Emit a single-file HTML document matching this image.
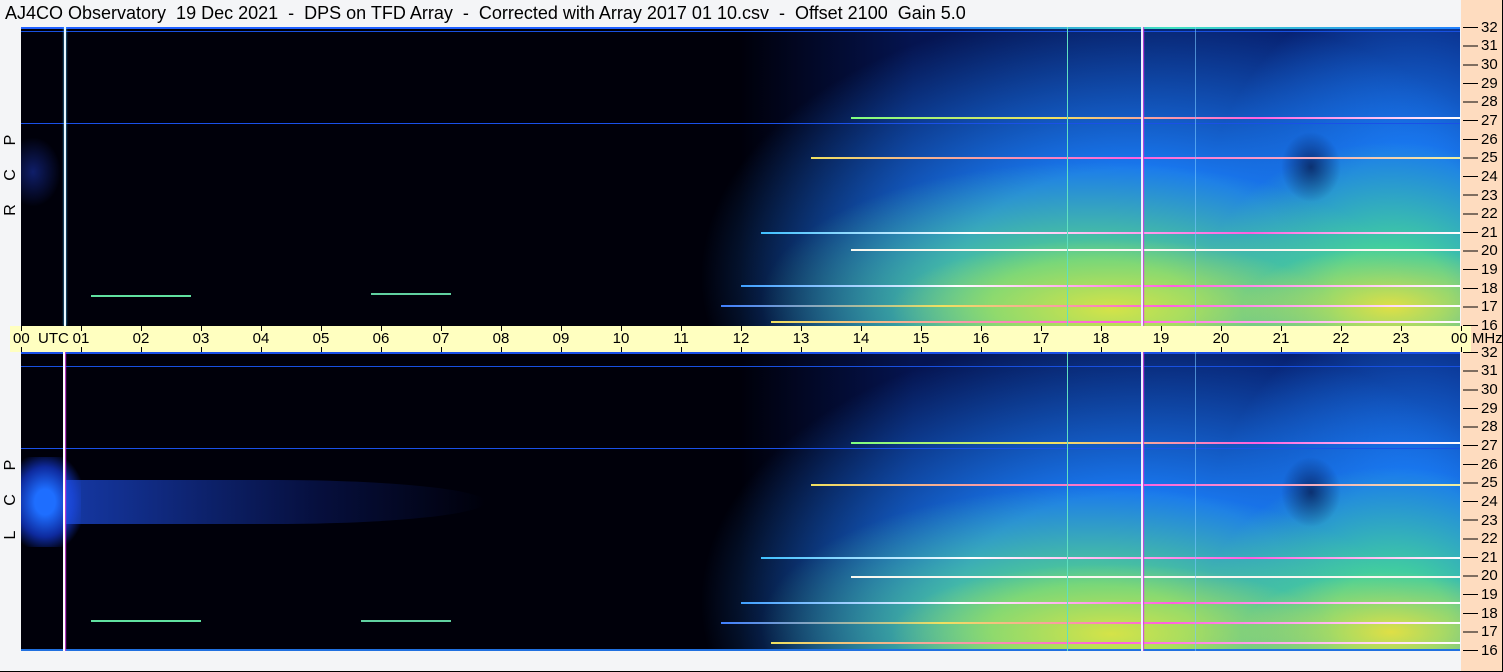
<!DOCTYPE html>
<html><head><meta charset="utf-8"><style>
*{margin:0;padding:0;box-sizing:border-box}
body{width:1503px;height:672px;background:#f4f5f7;position:relative;overflow:hidden;font-family:"Liberation Sans",sans-serif;color:#000}
.title{position:absolute;left:5px;top:3px;font-size:18px;line-height:20px;white-space:pre}
.rs{position:absolute;left:1461px;top:0;width:42px;height:672px;background:#fedcbf}
.spec{position:absolute;left:21px;width:1439px;height:299px;overflow:hidden;
background:
radial-gradient(ellipse 30px 35px at 1290px 140px,rgba(0,0,40,.6),rgba(0,0,40,0)),
radial-gradient(ellipse 150px 60px at 1370px 280px,rgba(240,225,60,.9),rgba(220,230,60,0)),
radial-gradient(ellipse 220px 70px at 1090px 282px,rgba(235,230,60,.85),rgba(220,230,60,0)),
radial-gradient(ellipse 330px 140px at 1070px 275px,rgba(90,220,130,.9) 30%,rgba(40,180,200,0)),
radial-gradient(ellipse 190px 150px at 1370px 265px,rgba(70,215,150,.9) 30%,rgba(40,180,200,0)),
radial-gradient(ellipse 430px 270px at 1110px 250px,rgba(25,120,240,1) 40%,rgba(10,50,180,0)),
radial-gradient(ellipse 210px 270px at 1385px 230px,rgba(25,120,240,1) 40%,rgba(10,50,180,0)),
linear-gradient(to right,rgba(0,0,0,0) 50%,rgba(10,40,150,.5) 62%,rgba(10,50,170,.7)),
#00000a}
.h{position:absolute;height:1px}
.v{position:absolute;top:0;width:2px;height:299px}
.ax{position:absolute;left:10px;top:326px;width:1461px;height:26px;background:#ffffc0}
.t{position:absolute;top:4px;font-size:15px;line-height:17px;transform:translateX(-50%);white-space:nowrap}
.fl{position:absolute;left:1481px;font-size:15px;line-height:15px}
.tl{position:absolute;left:1463px;width:15px;height:1px;background:#000}
.lab{position:absolute;left:3px;font-size:16px;line-height:16px;transform:rotate(-90deg);width:16px;text-align:center}
</style></head><body>
<div class="rs"></div>
<div class="title">AJ4CO Observatory  19 Dec 2021  -  DPS on TFD Array  -  Corrected with Array 2017 01 10.csv  -  Offset 2100  Gain 5.0</div>

<div class="lab" style="top:132px">P</div><div class="lab" style="top:167px">C</div><div class="lab" style="top:202px">R</div>
<div class="lab" style="top:457px">P</div><div class="lab" style="top:492px">C</div><div class="lab" style="top:527px">L</div>

<div class="spec" style="top:27px">
<div class="h" style="top:0;left:0;width:1439px;height:2px;background:linear-gradient(to right,#2060ff 60%,#40e0c0 80%,#2080ff)"></div>
<div class="h" style="top:4px;left:0;width:1439px;background:#1850e0"></div>
<div class="h" style="top:96px;left:0;width:1439px;background:#1a50e8"></div>
<div class="h" style="top:130px;left:790px;width:649px;height:2px;background:linear-gradient(to right,#f0e060,#ff60e0 50%,#f0f0a0)"></div>
<div class="h" style="top:90px;left:830px;width:609px;height:2px;background:linear-gradient(to right,#80ff80,#f0e060,#ff60e0,#fff)"></div>
<div class="h" style="top:205px;left:740px;width:699px;height:2px;background:linear-gradient(to right,#40c0ff,#ffffff 30%,#ff60e0 70%,#fff)"></div>
<div class="h" style="top:222px;left:830px;width:609px;height:2px;background:#f8f8f0"></div>
<div class="h" style="top:258px;left:720px;width:719px;height:2px;background:linear-gradient(to right,#40a0ff,#fff 30%,#ff60e0 60%,#fff)"></div>
<div class="h" style="top:278px;left:700px;width:739px;height:2px;background:linear-gradient(to right,#4080ff,#f0e060 30%,#ff60e0 60%,#fff)"></div>
<div class="h" style="top:294px;left:750px;width:689px;height:2px;background:linear-gradient(to right,#f0e060,#ff60e0,#fff)"></div>
<div class="h" style="top:268px;left:70px;width:100px;height:2px;background:#60e0a0"></div>
<div class="h" style="top:266px;left:350px;width:80px;height:2px;background:#60d0a0"></div>
<div style="position:absolute;left:0;top:110px;width:40px;height:70px;background:radial-gradient(ellipse at 30% 50%,rgba(30,60,200,.5),rgba(0,0,0,0) 70%)"></div>
<div class="v" style="left:43px;background:#e8f8ff;box-shadow:0 0 2px #40c0ff"></div>
<div class="v" style="left:1046px;width:1px;background:#60e0c0"></div>
<div class="v" style="left:1120px;background:#f0f0ff;box-shadow:1px 0 1px #d040e0"></div>
<div class="v" style="left:1174px;width:1px;background:rgba(120,200,255,.6)"></div>
</div>

<div class="ax">
<div class="t" style="left:3px;transform:none">00&nbsp; UTC</div>
<div class="t" style="left:71px">01</div><div class="t" style="left:131px">02</div><div class="t" style="left:191px">03</div><div class="t" style="left:251px">04</div><div class="t" style="left:311px">05</div><div class="t" style="left:371px">06</div><div class="t" style="left:431px">07</div><div class="t" style="left:491px">08</div><div class="t" style="left:551px">09</div><div class="t" style="left:611px">10</div><div class="t" style="left:671px">11</div><div class="t" style="left:731px">12</div><div class="t" style="left:791px">13</div><div class="t" style="left:851px">14</div><div class="t" style="left:911px">15</div><div class="t" style="left:971px">16</div><div class="t" style="left:1031px">17</div><div class="t" style="left:1091px">18</div><div class="t" style="left:1151px">19</div><div class="t" style="left:1211px">20</div><div class="t" style="left:1271px">21</div><div class="t" style="left:1331px">22</div><div class="t" style="left:1391px">23</div>
<div class="t" style="left:1441px;transform:none">00 MHz</div>
</div>

<div class="spec" style="top:352px">
<div class="h" style="top:0;left:0;width:1439px;height:2px;background:#1a50e8"></div>
<div class="h" style="top:14px;left:0;width:1439px;background:#1850e0"></div>
<div class="h" style="top:96px;left:0;width:1439px;background:#1a50e8"></div>
<div class="h" style="top:132px;left:790px;width:649px;height:2px;background:linear-gradient(to right,#f0e060,#ff60e0 50%,#f0f0a0)"></div>
<div class="h" style="top:90px;left:830px;width:609px;height:2px;background:linear-gradient(to right,#80ff80,#f0e060,#ff60e0,#fff)"></div>
<div class="h" style="top:205px;left:740px;width:699px;height:2px;background:linear-gradient(to right,#40c0ff,#fff 30%,#ff60e0 70%,#fff)"></div>
<div class="h" style="top:224px;left:830px;width:609px;height:2px;background:#f8f8f0"></div>
<div class="h" style="top:250px;left:720px;width:719px;height:2px;background:linear-gradient(to right,#40a0ff,#fff 30%,#ff60e0 60%,#fff)"></div>
<div class="h" style="top:270px;left:700px;width:739px;height:2px;background:linear-gradient(to right,#4080ff,#f0e060 30%,#ff60e0 60%,#fff)"></div>
<div class="h" style="top:290px;left:750px;width:689px;height:2px;background:linear-gradient(to right,#f0e060,#ff60e0,#fff)"></div>
<div class="h" style="top:268px;left:70px;width:110px;height:2px;background:#60e0a0"></div>
<div class="h" style="top:268px;left:340px;width:90px;height:2px;background:#60d0a0"></div>
<div style="position:absolute;left:0;top:105px;width:60px;height:90px;background:radial-gradient(ellipse at 40% 50%,rgba(30,110,255,1) 20%,rgba(20,60,220,.7) 55%,rgba(0,0,0,0) 80%)"></div>
<div style="position:absolute;left:45px;top:128px;width:420px;height:44px;background:linear-gradient(to right,rgba(30,80,230,.7),rgba(20,50,180,.3) 60%,rgba(0,0,0,0));border-radius:0 50% 50% 0"></div>
<div class="h" style="top:297px;left:0;width:1439px;height:2px;background:#2070e0"></div>
<div class="v" style="left:42px;background:#fff;box-shadow:1px 0 1px #d040e0"></div>
<div class="v" style="left:1046px;width:1px;background:#60e0c0"></div>
<div class="v" style="left:1120px;background:#f0f0ff;box-shadow:1px 0 1px #d040e0"></div>
<div class="v" style="left:1174px;width:1px;background:rgba(120,200,255,.6)"></div>
</div>

<!-- freq ticks -->
<div style="position:absolute;left:1463px;top:27px;width:15px;height:300px;background:repeating-linear-gradient(to bottom,#000 0 1px,transparent 1px 18.63px)"></div>
<div style="position:absolute;left:1463px;top:352px;width:15px;height:300px;background:repeating-linear-gradient(to bottom,#000 0 1px,transparent 1px 18.63px)"></div>
<div class="fl" style="top:20px">32</div><div class="fl" style="top:38px">31</div><div class="fl" style="top:57px">30</div><div class="fl" style="top:76px">29</div><div class="fl" style="top:94px">28</div><div class="fl" style="top:113px">27</div><div class="fl" style="top:132px">26</div><div class="fl" style="top:150px">25</div><div class="fl" style="top:169px">24</div><div class="fl" style="top:188px">23</div><div class="fl" style="top:206px">22</div><div class="fl" style="top:225px">21</div><div class="fl" style="top:243px">20</div><div class="fl" style="top:262px">19</div><div class="fl" style="top:281px">18</div><div class="fl" style="top:299px">17</div><div class="fl" style="top:318px">16</div>
<div class="fl" style="top:345px">32</div><div class="fl" style="top:363px">31</div><div class="fl" style="top:382px">30</div><div class="fl" style="top:401px">29</div><div class="fl" style="top:419px">28</div><div class="fl" style="top:438px">27</div><div class="fl" style="top:457px">26</div><div class="fl" style="top:475px">25</div><div class="fl" style="top:494px">24</div><div class="fl" style="top:513px">23</div><div class="fl" style="top:531px">22</div><div class="fl" style="top:550px">21</div><div class="fl" style="top:568px">20</div><div class="fl" style="top:587px">19</div><div class="fl" style="top:606px">18</div><div class="fl" style="top:624px">17</div><div class="fl" style="top:643px">16</div>

<div style="position:absolute;left:0;top:326px;width:1503px;height:26px;background:
repeating-linear-gradient(to right,#000 0 1px,transparent 1px 60px) 21px 0/1441px 5px no-repeat,
repeating-linear-gradient(to right,#000 0 1px,transparent 1px 60px) 21px 21px/1441px 5px no-repeat"></div>
<div style="position:absolute;left:0;top:671px;width:1503px;height:1px;background:#000"></div>
<div style="position:absolute;left:1502px;top:0;width:1px;height:672px;background:#000"></div>
</body></html>
